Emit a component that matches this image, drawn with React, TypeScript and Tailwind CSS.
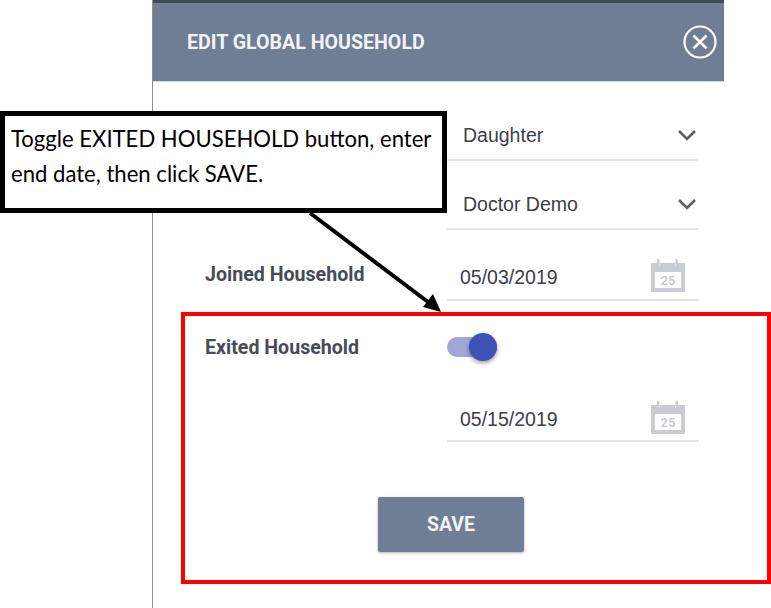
const roboto = "font-['Roboto',sans-serif]";
const arial = "font-['Liberation_Sans',Arial,sans-serif]";

function Chevron() {
  return (
    <svg width="20" height="12" viewBox="0 0 20 12" fill="none" className="mr-[2px]">
      <path d="M2 2l8 8 8-8" stroke="#5b6069" strokeWidth="2.6" />
    </svg>
  );
}

function CalendarIcon() {
  return (
    <svg width="34" height="34" viewBox="0 0 34 34" className="mr-[14px] -mt-[2px]">
      <path d="M0 4h6v3h3V4h15v3h3V4h7v29H0z" fill="#c9ccd3" />
      <rect x="6" y="0" width="2.5" height="8" rx="1.2" fill="#c9ccd3" />
      <rect x="24.5" y="0" width="2.5" height="8" rx="1.2" fill="#c9ccd3" />
      <rect x="4" y="13" width="26" height="16" fill="#fff" />
      <text x="17" y="26" textAnchor="middle" fontSize="13" fill="#c4c7ce" fontFamily="Roboto, sans-serif" fontWeight="500">
        25
      </text>
    </svg>
  );
}

function Field({ label, value, select, height }: { label?: string; value: string; select?: boolean; height: string }) {
  return (
    <div className="flex">
      <div className={`w-[242px] ${height} flex items-center`}>
        {label && <span className={`${roboto} text-[19.6px] font-bold text-[#474c55] relative -top-[3px]`}>{label}</span>}
      </div>
      <div className={`w-[252px] ${height} flex items-center justify-between border-b-2 border-[#e3e5e9]`}>
        <span className={`${arial} text-[19.5px] text-[#3c4049] ${select ? 'pl-[16px] pt-[1px]' : 'pl-[13px] pt-[2px]'}`}>{value}</span>
        {select ? <Chevron /> : <CalendarIcon />}
      </div>
    </div>
  );
}

export default function App() {
  return (
    <div className="relative w-[771px] h-[608px] bg-white overflow-hidden">
      <div className="ml-[152px] w-[572px] h-[608px] border-l-[1.5px] border-[#8f8f8f]">
        <div className="h-[3px] bg-[#3f4a5a]" />
        <div className="h-[79px] bg-[#6f7d95] border-b border-[#d5d9e0] flex items-center justify-between pl-[34px] pr-[7px]">
          <span className={`${roboto} text-[19.6px] font-bold text-[#f1f3f7] whitespace-nowrap pt-[2px]`}>EDIT GLOBAL HOUSEHOLD</span>
          <svg width="34" height="34" viewBox="0 0 34 34" fill="none">
            <circle cx="17" cy="17" r="15.5" stroke="#fff" strokeWidth="2.2" />
            <path d="M10.5 10.5l13 13M23.5 10.5l-13 13" stroke="#fff" strokeWidth="2.6" />
          </svg>
        </div>

        <div className="pl-[52px] pt-[29px]">
          <div className="flex flex-col gap-[19px]">
            <Field value="Daughter" select height="h-[50px]" />
            <Field value="Doctor Demo" select height="h-[50px]" />
          </div>
          <div className="mt-[24px]">
            <Field label="Joined Household" value="05/03/2019" height="h-[47px]" />
          </div>
          <div className="flex items-center h-[28px] mt-[32px]">
            <span className={`${roboto} text-[19.6px] font-bold text-[#474c55] w-[242px] pt-[1px]`}>Exited Household</span>
            <div className="relative w-[50px] h-[20px] rounded-full bg-[#a0a8da]">
              <div className="absolute right-0 -top-[4px] w-[28px] h-[28px] rounded-full bg-[#3f51b5] shadow-[0_2px_4px_rgba(0,0,0,0.4)]" />
            </div>
          </div>
          <div className="mt-[36px]">
            <Field value="05/15/2019" height="h-[45px]" />
          </div>
          <div className="mt-[55px] ml-[173px]">
            <button className={`${roboto} w-[146px] h-[55px] rounded-[2px] bg-[#6f7d95] text-[19.5px] font-bold text-[#f1f3f7] shadow-[0_1px_3px_rgba(0,0,0,0.3)]`}>
              SAVE
            </button>
          </div>
        </div>
      </div>

      {/* annotation overlays */}
      <div className="absolute left-0 top-[111px] w-[447px] h-[102px] bg-white border-[5px] border-black pl-[6px] pt-[5px]">
        <p className="font-['Lato',sans-serif] text-[22.1px] leading-[35px] text-black whitespace-nowrap">
          Toggle EXITED HOUSEHOLD button, enter
          <br />
          end date, then click SAVE.
        </p>
      </div>
      <svg className="absolute left-[300px] top-[205px]" width="150" height="115" viewBox="0 0 150 115">
        <path d="M10 8L132 100" stroke="#000" strokeWidth="4" />
        <path d="M141 107L123 102L133 89z" fill="#000" />
      </svg>
      <div className="absolute left-[181px] top-[312px] w-[590px] h-[272px] border-[4px] border-[#ff0000]" />
    </div>
  );
}
